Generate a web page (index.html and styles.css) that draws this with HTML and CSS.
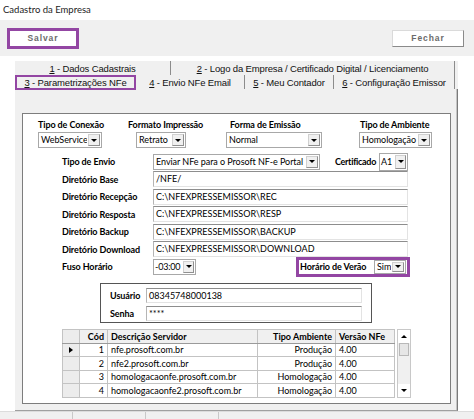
FILE: index.html
```html
<!DOCTYPE html>
<html lang="pt-BR">
  <head>
    <meta charset="UTF-8" />
    <title>Cadastro da Empresa</title>
    <link rel="stylesheet" href="styles.css">
  </head>
  <body>
    <div class="title">Cadastro da Empresa</div>
    <div class="toolbar">
      <div class="btn btn-salvar">Salvar</div>
      <div class="btn">Fechar</div>
    </div>
    <div class="form">
      <div class="tabs">
        <div class="tab-row">
          <div class="tab t1"><u>1</u>&nbsp;- Dados Cadastrais</div>
          <div class="tab t2"><u>2</u>&nbsp;- Logo da Empresa / Certificado Digital / Licenciamento</div>
        </div>
        <div class="tab-row">
          <div class="tab t3 active"><u>3</u>&nbsp;- Parametrizações NFe</div>
          <div class="tab t4"><u>4</u>&nbsp;- Envio NFe Email</div>
          <div class="tab t5"><u>5</u>&nbsp;- Meu Contador</div>
          <div class="tab t6"><u>6</u>&nbsp;- Configuração Emissor</div>
        </div>
      </div>
      <div class="panel">
        <div class="group">
          <div class="top-row">
            <div class="col c1">
              <label>Tipo de Conexão</label>
              <div class="select"><span class="val">WebService</span><span class="arrow"></span></div>
            </div>
            <div class="col c2">
              <label>Formato Impressão</label>
              <div class="select"><span class="val">Retrato</span><span class="arrow"></span></div>
            </div>
            <div class="col c3">
              <label>Forma de Emissão</label>
              <div class="select"><span class="val">Normal</span><span class="arrow"></span></div>
            </div>
            <div class="col c4">
              <label>Tipo de Ambiente</label>
              <div class="select"><span class="val">Homologação</span><span class="arrow"></span></div>
            </div>
          </div>

          <div class="rows">
            <div class="row">
              <span class="lbl">Tipo de Envio</span>
              <div class="select w-envio"><span class="val">Enviar NFe para o Prosoft NF-e Portal</span><span class="arrow"></span></div>
              <span class="lbl cert">Certificado</span>
              <div class="select w-a1"><span class="val">A1</span><span class="arrow"></span></div>
            </div>
            <div class="row">
              <span class="lbl">Diretório Base</span>
              <div class="input">/NFE/</div>
            </div>
            <div class="row">
              <span class="lbl">Diretório Recepção</span>
              <div class="input">C:\NFEXPRESSEMISSOR\REC</div>
            </div>
            <div class="row">
              <span class="lbl">Diretório Resposta</span>
              <div class="input">C:\NFEXPRESSEMISSOR\RESP</div>
            </div>
            <div class="row">
              <span class="lbl">Diretório Backup</span>
              <div class="input">C:\NFEXPRESSEMISSOR\BACKUP</div>
            </div>
            <div class="row">
              <span class="lbl">Diretório Download</span>
              <div class="input">C:\NFEXPRESSEMISSOR\DOWNLOAD</div>
            </div>
            <div class="row">
              <span class="lbl">Fuso Horário</span>
              <div class="select w-fuso"><span class="val">-03:00</span><span class="arrow"></span></div>
              <div class="verao">
                <span class="lbl">Horário de Verão</span>
                <div class="select w-sim"><span class="val">Sim</span><span class="arrow"></span></div>
              </div>
            </div>
          </div>

          <div class="cred">
            <div class="cred-row">
              <span class="lbl">Usuário</span>
              <div class="input">08345748000138</div>
            </div>
            <div class="cred-row">
              <span class="lbl">Senha</span>
              <div class="input">****</div>
            </div>
          </div>

          <div class="grid-wrap">
            <table class="grid">
              <tr class="head">
                <td class="ind"></td>
                <td class="num">Cód</td>
                <td class="desc">Descrição Servidor</td>
                <td class="amb">Tipo Ambiente</td>
                <td class="ver">Versão NFe</td>
              </tr>
              <tr>
                <td class="ind"><span class="pointer"></span></td>
                <td class="num">1</td>
                <td class="desc">nfe.prosoft.com.br</td>
                <td class="amb">Produção</td>
                <td class="ver">4.00</td>
              </tr>
              <tr>
                <td class="ind"></td>
                <td class="num">2</td>
                <td class="desc">nfe2.prosoft.com.br</td>
                <td class="amb">Produção</td>
                <td class="ver">4.00</td>
              </tr>
              <tr>
                <td class="ind"></td>
                <td class="num">3</td>
                <td class="desc">homologacaonfe.prosoft.com.br</td>
                <td class="amb">Homologação</td>
                <td class="ver">4.00</td>
              </tr>
              <tr>
                <td class="ind"></td>
                <td class="num">4</td>
                <td class="desc">homologacaonfe2.prosoft.com.br</td>
                <td class="amb">Homologação</td>
                <td class="ver">4.00</td>
              </tr>
            </table>
            <div class="scroll">
              <div class="sb-btn"><span class="tri-up"></span></div>
              <div class="sb-thumb"></div>
              <div class="sb-track"></div>
              <div class="sb-btn"><span class="tri-down"></span></div>
            </div>
          </div>
        </div>
      </div>
      <div class="bottom">
        <div class="bcell"></div>
        <div class="bcell"></div>
        <div class="bcell"></div>
      </div>
    </div>
  </body>
</html>
```

FILE: styles.css
```css
* {
  box-sizing: border-box;
}
body {
  margin: 0;
  width: 474px;
  height: 419px;
  overflow: hidden;
  background: #fff;
  font-family: Lato, "Liberation Sans", sans-serif;
  font-size: 9px;
  color: #000;
}
.title {
  height: 20px;
  padding: 4px 0 0 3px;
  font-size: 9.5px;
  color: #222;
}
.toolbar {
  height: 36px;
  background: #f0f0f0;
  display: flex;
  align-items: center;
  justify-content: space-between;
  padding: 0 10px 0 7px;
}
.btn {
  width: 72px;
  height: 17px;
  background: #fff;
  border: 1px solid #dadada;
  border-right-color: #8a8a8a;
  border-bottom-color: #8a8a8a;
  font-family: "Liberation Sans", sans-serif;
  font-weight: bold;
  font-size: 8.5px;
  letter-spacing: 0.9px;
  color: #6b6b6b;
  display: flex;
  align-items: center;
  justify-content: center;
}
.btn-salvar {
  height: 21px;
  border: 3px solid #9346a3;
}
.form {
  padding: 5px 0 0 15px;
}

/* tabs */
.tabs {
  width: 443px;
  background: #f0f0f0;
}
.tab-row {
  display: flex;
  height: 14px;
}
.tab {
  display: flex;
  align-items: center;
  justify-content: center;
  font-family: "Liberation Sans", sans-serif;
  font-size: 9.5px;
  letter-spacing: -0.15px;
  color: #111;
  white-space: nowrap;
  border-right: 1px solid #8c8c8c;
}
.t1 { width: 156px; }
.t2 { width: 284px; }
.t3 { width: 121px; }
.t4 { width: 109px; }
.t5 { width: 89px; }
.t6 { width: 121px; }
.tab.active {
  border: 2px solid #9346a3;
  height: 15px;
}

/* panel */
.panel {
  width: 443px;
  height: 322px;
  background: #f0f0f0;
  border-right: 1px solid #7a7a7a;
  border-bottom: 1px solid #a0a0a0;
  box-shadow: inset -1px 0 0 #c4c4c4;
  padding: 24px 0 0 7px;
}
.group {
  width: 429px;
  height: 291px;
  background: #fff;
  border: 1px solid #7d7d7d;
  padding: 4px 0 0 15px;
}
.top-row {
  display: flex;
}
.col {
  display: flex;
  flex-direction: column;
}
.col label {
  height: 14px;
  line-height: 13px;
  font-weight: bold;
  letter-spacing: -0.1px;
  white-space: nowrap;
}
.c1 { width: 66px; }
.c1 .select { width: 64px; }
.c2 { margin-left: 24px; width: 80px; }
.c2 .select { margin-left: 8px; width: 50px; }
.c3 { margin-left: 18px; width: 96px; }
.c3 label { padding-left: 4px; }
.c4 { margin-left: 37px; width: 73px; }
.c4 label { padding-left: 1px; }

.select {
  display: flex;
  height: 16px;
  border: 1px solid #a8a8a8;
  background: #fff;
}
.select .val {
  flex: 1;
  padding-left: 2px;
  line-height: 14px;
  overflow: hidden;
  white-space: nowrap;
  letter-spacing: -0.05px;
}
.select .arrow {
  width: 12px;
  flex-shrink: 0;
  margin: 1px;
  background: #f0f0f0;
  border: 1px solid #d0d0d0;
  border-right-color: #909090;
  border-bottom-color: #909090;
  display: flex;
  align-items: center;
  justify-content: center;
}
.select .arrow::after {
  content: "";
  border-left: 3px solid transparent;
  border-right: 3px solid transparent;
  border-top: 3px solid #000;
}

.rows {
  margin-top: 5px;
}
.row {
  display: flex;
  align-items: center;
  height: 17.5px;
  padding-left: 24px;
}
.lbl {
  font-weight: bold;
  letter-spacing: -0.1px;
  white-space: nowrap;
}
.row > .lbl {
  width: 91px;
}
.input {
  width: 255px;
  height: 16px;
  border: 1px solid #e3e3e3;
  border-top-color: #8d8d8d;
  border-left-color: #b5b5b5;
  padding-left: 2px;
  line-height: 14px;
  white-space: nowrap;
}
.w-envio { width: 167px; }
.row > .lbl.cert {
  width: 43px;
  margin-left: 15px;
  letter-spacing: -0.3px;
}
.w-a1 {
  width: 29px;
  height: 18px;
  margin-left: 1px;
}
.w-a1 .val {
  line-height: 16px;
  padding-left: 1px;
}
.w-a1 .arrow { width: 11px; }
.w-fuso { width: 43px; }
.w-fuso .val {
  padding-left: 1px;
  letter-spacing: -0.2px;
}
.w-fuso .arrow { width: 11px; }
.verao {
  display: flex;
  align-items: center;
  margin-left: 100px;
  width: 114px;
  height: 20px;
  border: 3px solid #9346a3;
}
.verao .lbl {
  width: 75px;
  padding-left: 1px;
}
.w-sim { width: 32px; height: 14px; }
.w-sim .val { line-height: 12px; }

/* login */
.cred {
  margin: 7.5px 0 0 62px;
  width: 272px;
  height: 40px;
  border: 1px solid #555;
  padding: 2px 0 0 9px;
}
.cred-row {
  display: flex;
  align-items: center;
  height: 18px;
}
.cred-row .lbl {
  width: 36px;
}
.cred-row .input {
  width: 216px;
  height: 15px;
  line-height: 13px;
}

/* servers grid */
.grid-wrap {
  display: flex;
  margin: 6px 0 0 24px;
}
.grid {
  border-collapse: collapse;
  border: 1px solid #8f8f8f;
  table-layout: fixed;
  width: 332px;
}
.grid td {
  height: 13.5px;
  padding: 0 3px;
  border: 1px solid #c3c3c3;
  white-space: nowrap;
  overflow: hidden;
  line-height: 11px;
}
.grid .head td {
  background: #f0f0f0;
  font-weight: bold;
  border-bottom-color: #9a9a9a;
}
.grid td.ind {
  width: 17px;
  background: #ececec;
  padding: 0 0 0 6px;
}
.grid .num { width: 28px; text-align: right; }
.grid .desc { width: 150px; }
.grid .amb { width: 78px; text-align: right; }
.grid .ver { width: 59px; }
.pointer {
  display: block;
  width: 0;
  border-top: 3.5px solid transparent;
  border-bottom: 3.5px solid transparent;
  border-left: 4px solid #000;
}
.scroll {
  width: 14px;
  margin-left: 2px;
  border: 1px solid #c8c8c8;
  background: #f0f0f0;
  display: flex;
  flex-direction: column;
}
.sb-btn {
  height: 13px;
  background: #fff;
  display: flex;
  align-items: center;
  justify-content: center;
}
.sb-thumb {
  height: 13px;
  margin: 0 1px;
  background: #e6e6e6;
  border: 1px solid #b8b8b8;
}
.sb-track {
  flex: 1;
}
.tri-up {
  border-left: 3px solid transparent;
  border-right: 3px solid transparent;
  border-bottom: 3px solid #000;
}
.tri-down {
  border-left: 3px solid transparent;
  border-right: 3px solid transparent;
  border-top: 3px solid #000;
}

/* lower strip */
.bottom {
  display: flex;
  margin-left: -15px;
  width: 474px;
  height: 8px;
  background: #f0f0f0;
  border-top: 1px solid #dcdcdc;
}
.bcell {
  width: 73px;
  border-right: 1px solid #c8c8c8;
}
```
